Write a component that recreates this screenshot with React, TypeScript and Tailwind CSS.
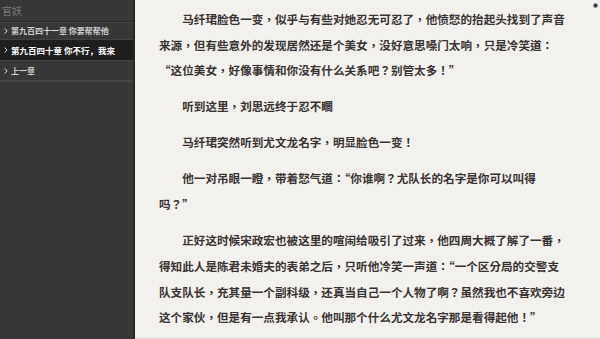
import React from "react";

const paras: React.ReactNode[] = [
  "马纤珺脸色一变，似乎与有些对她忍无可忍了，他愤怒的抬起头找到了声音来源，但有些意外的发现居然还是个美女，没好意思嗓门太响，只是冷笑道：“这位美女，好像事情和你没有什么关系吧？别管太多！”",
  "听到这里，刘思远终于忍不瞷",
  "马纤珺突然听到尤文龙名字，明显脸色一变！",
  <>
    他一对吊眼一瞪，带着怒气道：“你谁啊？尤队长的名字是你可以叫得
    <br />
    吗？”
  </>,
  "正好这时候宋政宏也被这里的喧闹给吸引了过来，他四周大概了解了一番，得知此人是陈君未婚夫的表弟之后，只听他冷笑一声道：“一个区分局的交警支队支队长，充其量一个副科级，还真当自己一个人物了啊？虽然我也不喜欢旁边这个家伙，但是有一点我承认。他叫那个什么尤文龙名字那是看得起他！”",
];

function Chevron() {
  return (
    <svg width="4" height="6" viewBox="0 0 4 6" className="shrink-0">
      <path d="M0.5 0.5 L3.2 3 L0.5 5.5" fill="none" stroke="#cfcfcf" strokeWidth="1" />
    </svg>
  );
}

export default function App() {
  const font = { fontFamily: '"Noto Sans CJK SC", "Noto Sans", sans-serif' };
  const mainFont = { fontFamily: '"Noto Sans CJK TC", "Noto Sans CJK SC", sans-serif' };
  return (
    <div lang="zh-CN" className="w-[600px] h-[339px] flex overflow-hidden bg-[#f2f1ed]" style={font}>
      <aside className="w-[135px] h-full bg-[#373737] border-r-[2px] border-[#262626] flex flex-col shrink-0">
        <div className="h-[22px] flex items-center pl-[2px] text-[10px] text-[#7a7a7a] border-b border-[#2a2a2a]">
          官妖
        </div>
        <div className="h-[18px] flex items-center gap-[3px] pl-[4px] text-[8px] font-bold text-[#cfcfcf] border-t border-[#444] border-b border-[#2a2a2a]">
          <Chevron />
          <span>第九百四十一章 你要帮帮他</span>
        </div>
        <div className="h-[20px] flex items-center gap-[3px] pl-[4px] text-[8.5px] font-bold text-white bg-[#1e1e1e]">
          <Chevron />
          <span>第九百四十章 你不行，我来</span>
        </div>
        <div className="h-[21px] flex items-center gap-[3px] pl-[4px] text-[8px] font-bold text-[#cfcfcf] border-t border-[#444] border-b border-[#2a2a2a]">
          <Chevron />
          <span>上一章</span>
        </div>
        <div className="border-t border-[#444]" />
      </aside>
      <main className="flex-1 relative pl-[24px] pt-[7px] border-b-[2px] border-[#e6e5e1]">
        <div lang="zh-TW" className="w-[408px] text-[11.6px] leading-[25.7px] text-[#3a3434] font-bold" style={mainFont}>
          {paras.map((p, i) => (
            <p key={i} className="indent-[2em] mb-[10.3px]">
              {p}
            </p>
          ))}
        </div>
        <div className="absolute right-[2px] top-[3px] w-[5px] h-[5px] rounded-full bg-[#333] border border-[#888]" />
      </main>
    </div>
  );
}
